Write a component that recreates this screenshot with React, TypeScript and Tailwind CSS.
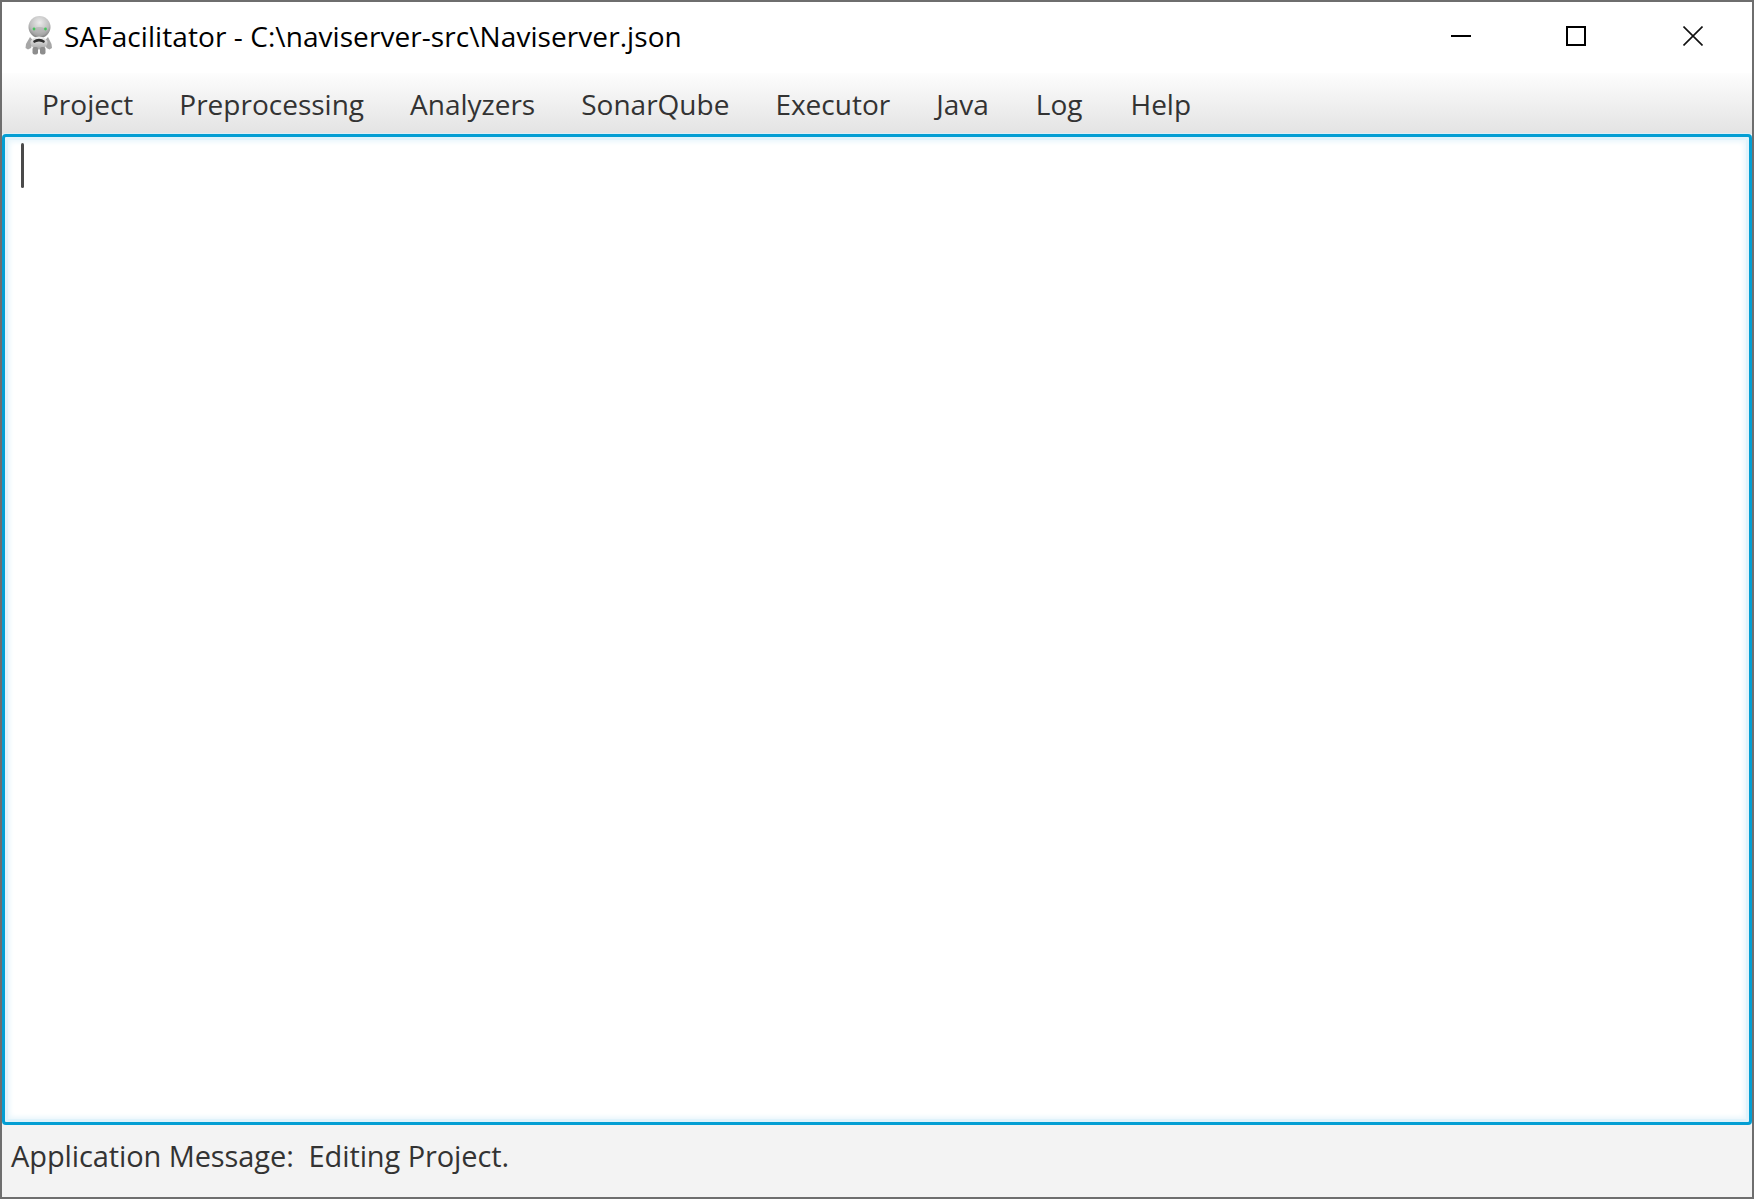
import React from "react";

function Robot() {
  return (
    <svg width="28" height="39" viewBox="0 0 28 39" className="shrink-0">
      <defs>
        <radialGradient id="h" cx="0.5" cy="0.3" r="0.75">
          <stop offset="0" stopColor="#ececec" />
          <stop offset="0.6" stopColor="#bdbdbd" />
          <stop offset="1" stopColor="#6f6f6f" />
        </radialGradient>
        <linearGradient id="b" x1="0" y1="0" x2="0" y2="1">
          <stop offset="0" stopColor="#f4f4f4" />
          <stop offset="1" stopColor="#a4a4a4" />
        </linearGradient>
      </defs>
      <path d="M5 21 L1 28 L0.5 32 L3 33.5 L6 32 L8.5 25 Z" fill="#a6a6a6" />
      <path d="M23 21 L26.5 28 L27 32 L24.5 33.5 L21.5 32 L19.5 25 Z" fill="#a6a6a6" />
      <ellipse cx="14.5" cy="11" rx="11" ry="11" fill="url(#h)" />
      <ellipse cx="14.5" cy="15.5" rx="7" ry="4.5" fill="#a9a9a9" opacity="0.55" />
      <circle cx="9" cy="13" r="1.4" fill="#45c45c" />
      <circle cx="20.5" cy="13" r="1.4" fill="#45c45c" />
      <ellipse cx="14" cy="27" rx="8.5" ry="6.5" fill="url(#b)" />
      <path d="M8 25 Q14 20.5 20 25 L19 27 Q14 24 9 27 Z" fill="#2e2e2e" />
      <rect x="7.5" y="31" width="5.5" height="7.5" rx="2" fill="#8d8d8d" />
      <rect x="15" y="31" width="5.5" height="7.5" rx="2" fill="#8d8d8d" />
    </svg>
  );
}

export default function App() {
  return (
    <div className="w-[1754px] h-[1199px] overflow-hidden flex flex-col border-2 border-[#6e6e6e] bg-white font-['Open_Sans','Noto_Sans',sans-serif]">
      <header className="h-[71px] shrink-0 flex items-center bg-white">
        <div className="ml-[23px] mr-[11px] mb-[4px] flex">
          <Robot />
        </div>
        <span className="text-[28px] leading-none text-black tracking-[0.07px] whitespace-nowrap mb-[4px]">
          SAFacilitator - C:\naviserver-src\Naviserver.json
        </span>
        <div className="ml-auto flex items-center mr-[49px] mb-[3px]">
          <svg width="20" height="20" viewBox="0 0 20 20">
            <rect x="0" y="9" width="20" height="2" fill="#000" />
          </svg>
          <svg width="20" height="20" viewBox="0 0 20 20" className="ml-[95px]">
            <rect x="1" y="1" width="18" height="18" fill="none" stroke="#000" strokeWidth="2" />
          </svg>
          <svg width="20" height="20" viewBox="0 0 20 20" className="ml-[97px]">
            <path d="M0.5 0.5 L19.5 19.5 M19.5 0.5 L0.5 19.5" stroke="#111" strokeWidth="1.6" fill="none" />
          </svg>
        </div>
      </header>

      <nav className="h-[61px] shrink-0 flex items-center pl-[40px] gap-[46px] bg-gradient-to-b from-[#fdfdfd] to-[#e3e3e3] text-[28px] leading-none text-[#333333] whitespace-nowrap">
        <span>Project</span>
        <span>Preprocessing</span>
        <span>Analyzers</span>
        <span>SonarQube</span>
        <span>Executor</span>
        <span>Java</span>
        <span className="ml-[1px]">Log</span>
        <span className="ml-[2px]">Help</span>
      </nav>

      <main className="flex-1 min-h-0 rounded-[4px] border-[3px] border-[#039ed3] bg-white shadow-[inset_0_0_0_3px_#e0f3fb,inset_0_0_5px_5px_#e9f6fc,0_0_0_1px_#dceff7]">
        <div className="ml-[16px] mt-[6px] w-[2.5px] h-[45px] rounded-full bg-[#4a4a4a]" />
      </main>

      <footer className="h-[72px] shrink-0 bg-[#f3f3f3] flex items-center pl-[9px] pb-[12px] text-[29px] leading-none text-[#333333] tracking-[-0.1px] whitespace-pre">
        Application Message:  Editing Project.
      </footer>
    </div>
  );
}
